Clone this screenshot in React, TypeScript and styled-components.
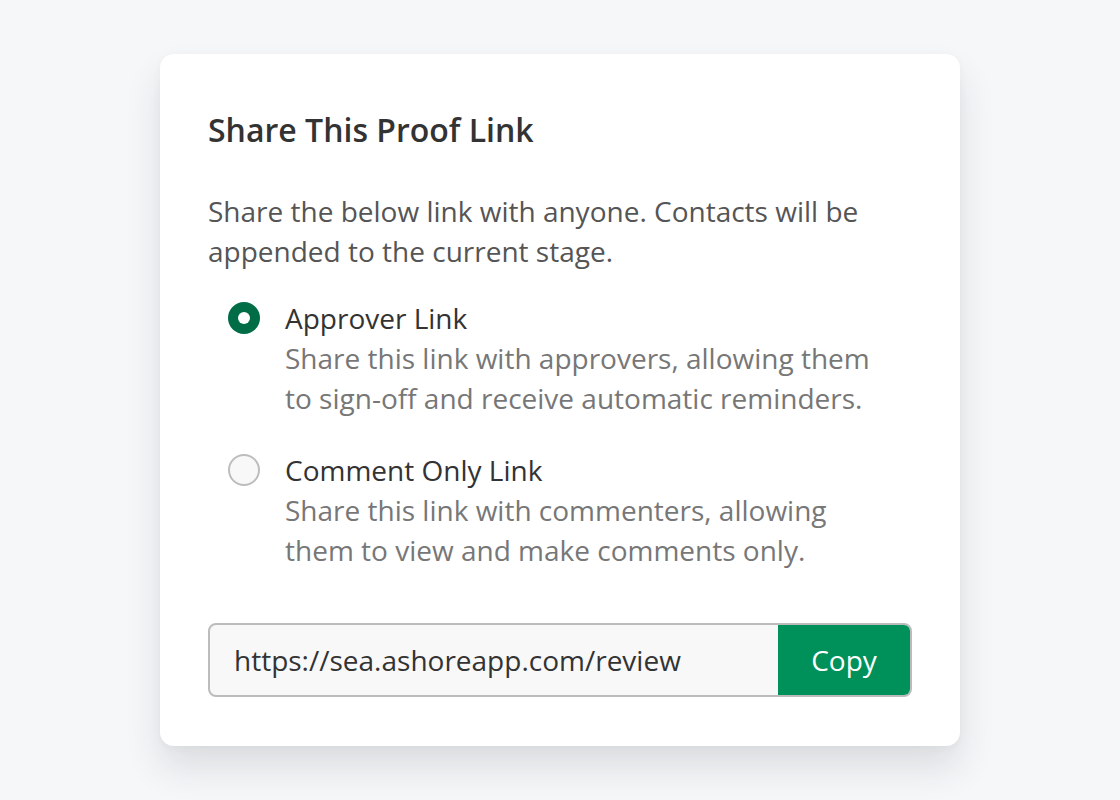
import React, { useState } from 'react';
import styled, { createGlobalStyle } from 'styled-components';

const GlobalStyle = createGlobalStyle`
  html, body {
    margin: 0;
    padding: 0;
    background: #f6f7f9;
    font-family: "Open Sans", "Liberation Sans", sans-serif;
  }
`;

const Page = styled.div`
  min-height: 800px;
  display: flex;
  justify-content: center;
  align-items: flex-start;
  padding-top: 54px;
  box-sizing: border-box;
`;

const Card = styled.div`
  width: 800px;
  box-sizing: border-box;
  background: #ffffff;
  border-radius: 14px;
  padding: 56px 48px 49px;
  box-shadow: 0 22px 36px rgba(30, 40, 50, 0.12), 0 2px 8px rgba(30, 40, 50, 0.04);
`;

const Title = styled.h2`
  margin: 0;
  font-size: 32px;
  line-height: 40px;
  font-weight: 600;
  color: #333333;
`;

const Intro = styled.p`
  margin: 41px 0 0;
  font-size: 28px;
  line-height: 40px;
  color: #555555;
`;

const Options = styled.div`
  display: flex;
  flex-direction: column;
  gap: 32px;
  margin-top: 27px;
  padding-left: 20px;
`;

const Option = styled.label`
  display: flex;
  align-items: flex-start;
  gap: 25px;
  cursor: pointer;
`;

const Radio = styled.span<{ $checked: boolean }>`
  flex: none;
  width: 32px;
  height: 32px;
  margin-top: 4px;
  box-sizing: border-box;
  border-radius: 50%;
  display: flex;
  align-items: center;
  justify-content: center;
  background: ${p => (p.$checked ? '#006d46' : '#f8f8f8')};
  border: ${p => (p.$checked ? 'none' : '2px solid #bdbdbd')};

  &::after {
    content: '';
    display: ${p => (p.$checked ? 'block' : 'none')};
    width: 12px;
    height: 12px;
    border-radius: 50%;
    background: #ffffff;
  }
`;

const OptionText = styled.div`
  display: flex;
  flex-direction: column;
`;

const OptionLabel = styled.span`
  font-size: 28px;
  line-height: 40px;
  color: #333333;
`;

const OptionDesc = styled.span`
  font-size: 28px;
  line-height: 40px;
  color: #777777;
`;

const LinkBox = styled.div`
  margin-top: 53px;
  display: flex;
  height: 74px;
  box-sizing: border-box;
  border: 2px solid #bcbcbc;
  border-radius: 8px;
  overflow: hidden;
  background: #f8f8f8;
`;

const LinkText = styled.div`
  flex: 1;
  display: flex;
  align-items: center;
  padding-left: 24px;
  font-size: 28px;
  color: #333333;
`;

const CopyButton = styled.button`
  flex: none;
  width: 132px;
  border: none;
  background: #00915a;
  color: #ffffff;
  font-family: inherit;
  font-size: 28px;
  cursor: pointer;
`;

const options = [
  {
    id: 'approver',
    label: 'Approver Link',
    desc: ['Share this link with approvers, allowing them', 'to sign-off and receive automatic reminders.'],
  },
  {
    id: 'comment',
    label: 'Comment Only Link',
    desc: ['Share this link with commenters, allowing', 'them to view and make comments only.'],
  },
];

export default function App() {
  const [selected, setSelected] = useState('approver');

  return (
    <>
      <GlobalStyle />
      <Page>
        <Card>
          <Title>Share This Proof Link</Title>
          <Intro>
            Share the below link with anyone. Contacts will be
            <br />
            appended to the current stage.
          </Intro>
          <Options>
            {options.map(o => (
              <Option key={o.id} onClick={() => setSelected(o.id)}>
                <Radio $checked={selected === o.id} />
                <OptionText>
                  <OptionLabel>{o.label}</OptionLabel>
                  {o.desc.map(line => (
                    <OptionDesc key={line}>{line}</OptionDesc>
                  ))}
                </OptionText>
              </Option>
            ))}
          </Options>
          <LinkBox>
            <LinkText>https://sea.ashoreapp.com/review</LinkText>
            <CopyButton>Copy</CopyButton>
          </LinkBox>
        </Card>
      </Page>
    </>
  );
}
